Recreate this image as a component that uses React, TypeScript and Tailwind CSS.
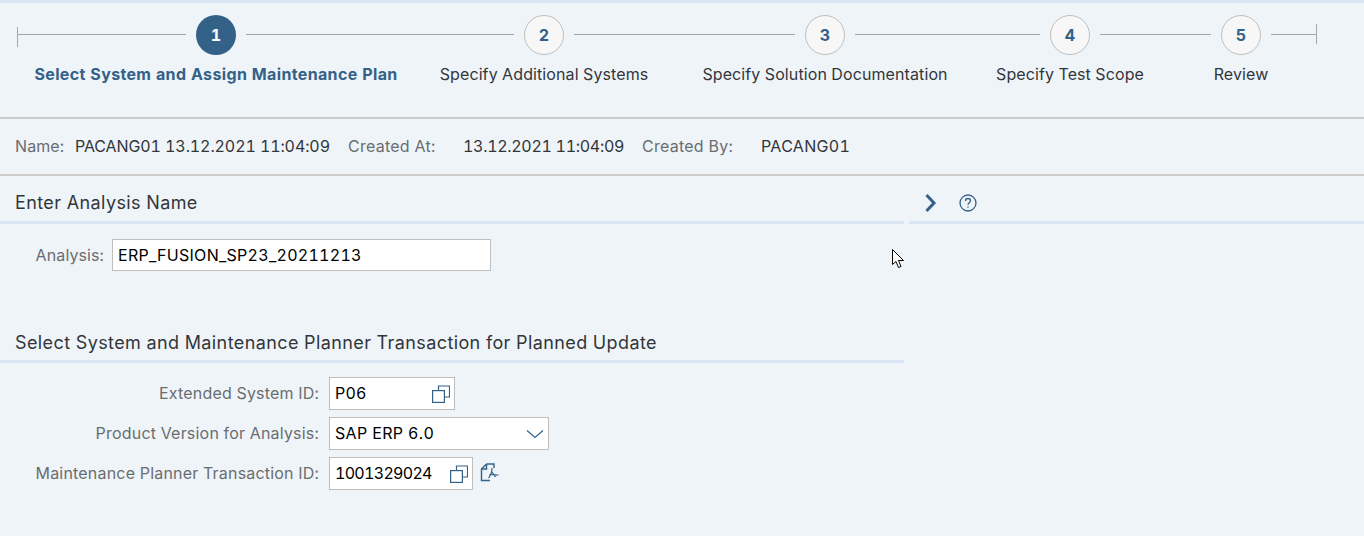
import { Fragment } from "react";

const STEPS = [
  { n: 1, label: "Select System and Assign Maintenance Plan", line: 168 },
  { n: 2, label: "Specify Additional Systems", line: 268 },
  { n: 3, label: "Specify Solution Documentation", line: 221 },
  { n: 4, label: "Specify Test Scope", line: 185 },
  { n: 5, label: "Review", line: 111 },
];

const CopyIcon = () => (
  <svg width="18" height="18" viewBox="0 0 18 18" fill="none" stroke="#346187" strokeWidth="1.2">
    <path d="M6.500 5V1h11v11h-5" />
    <rect x="0.600" y="5.600" width="11.800" height="11.800" />
  </svg>
);

const Field = ({ value, w, icon, valueClass }: { value: string; w: string; icon: React.ReactNode; valueClass?: string }) => (
  <div className={`${w} h-[33px] bg-white border border-[#bfbfbf] flex items-center justify-between pl-[5px] pr-[4px] text-[#000]`}>
    <span className={`-mt-[2px] ${valueClass ?? ""}`}>{value}</span>
    {icon}
  </div>
);

const App = () => {
  return (
    <div className="w-[1364px] h-[536px] overflow-hidden bg-[#eff4f9] text-[16px] text-[#32363a] tabular-nums tracking-[0.1px] font-['Inter','Liberation_Sans',sans-serif]">
      <div className="h-[3px] bg-[#d9e5f3]" />

      {/* wizard */}
      <div className="h-[116px] pt-[12px] pl-[17px] flex items-start border-b-2 border-[#cbcbcb]">
        <div className="w-px h-[20px] bg-[#a6a6a6] mt-[12px]" />
        {STEPS.map((s) => (
          <Fragment key={s.n}>
            <div className="h-px bg-[#a6a6a6] mt-[19px] mr-[10px]" style={{ width: s.line }} />
            <div className="w-10 flex flex-col items-center mr-[10px]">
              <div
                className={
                  s.n === 1
                    ? "w-10 h-10 rounded-full bg-[#346187] text-white font-bold flex items-center justify-center"
                    : "w-10 h-10 rounded-full bg-[#f7f7f7] border border-[#bfbfbf] text-[#346187] font-bold flex items-center justify-center"
                }
              >
                {s.n}
              </div>
              <div className={s.n === 1 ? "mt-[7px] whitespace-nowrap font-bold tracking-[0.35px] text-[#346187]" : "mt-[7px] whitespace-nowrap"}>
                {s.label}
              </div>
            </div>
          </Fragment>
        ))}
        <div className="w-[45px] h-px bg-[#a6a6a6] mt-[19px]" />
        <div className="w-px h-[20px] bg-[#a6a6a6] mt-[9px]" />
      </div>

      {/* header info */}
      <div className="h-[57px] pl-[15px] pb-[2px] flex items-center border-b-2 border-[#cbcbcb]">
        <span className="text-[#6a6d70] w-[60px]">Name:</span>
        <span className="w-[273px] tracking-[-0.1px]">PACANG01 13.12.2021 11:04:09</span>
        <span className="text-[#6a6d70] w-[115px] tracking-[0.25px]">Created At:</span>
        <span className="w-[179px] tracking-[-0.3px]">13.12.2021 11:04:09</span>
        <span className="text-[#6a6d70] w-[119px] tracking-[0.25px]">Created By:</span>
        <span className="tracking-[0.3px]">PACANG01</span>
      </div>

      <div className="flex">
        <div className="w-[904px] shrink-0">
          <div className="h-[48px] pl-[15px] pt-[7px] flex items-center text-[18px] tracking-[0.4px] border-b-[3px] border-[#d9e5f3]">
            Enter Analysis Name
          </div>
          <div className="mt-[15px] flex items-center h-[32px]">
            <span className="w-[104px] text-right text-[#6a6d70]">Analysis:</span>
            <div className="ml-[8px] w-[379px] h-[32px] bg-white border border-[#bfbfbf] flex items-center pl-[5px] text-black tracking-[0.28px]">
              ERP_FUSION_SP23_20211213
            </div>
          </div>

          <div className="mt-[48px] h-[44px] pl-[15px] pt-[6px] flex items-center text-[18px] tracking-[0.4px] border-b-[3px] border-[#d9e5f3]">
            Select System and Maintenance Planner Transaction for Planned Update
          </div>
          <div className="mt-[14px] flex flex-col gap-[7px] tracking-[0.2px]">
            <div className="flex items-center">
              <span className="w-[319px] text-right text-[#6a6d70] mr-[10px] -mt-[2px]">Extended System ID:</span>
              <Field value="P06" w="w-[126px]" icon={<CopyIcon />} />
            </div>
            <div className="flex items-center">
              <span className="w-[319px] text-right text-[#6a6d70] mr-[10px] -mt-[2px]">Product Version for Analysis:</span>
              <Field
                value="SAP ERP 6.0"
                w="w-[220px]"
                valueClass="tracking-[0.35px]"
                icon={
                  <svg width="18" height="10" viewBox="0 0 18 10" fill="none" stroke="#346187" strokeWidth="1.2">
                    <path d="M1 1.500l8 7 8-7" />
                  </svg>
                }
              />
            </div>
            <div className="flex items-center">
              <span className="w-[319px] text-right text-[#6a6d70] mr-[10px] -mt-[2px]">Maintenance Planner Transaction ID:</span>
              <Field value="1001329024" w="w-[144px]" valueClass="tracking-[-0.7px]" icon={<CopyIcon />} />
              <svg className="ml-[7px] -mt-[3px]" width="19" height="19" viewBox="0 0 19 19" fill="none" stroke="#346187" strokeWidth="1.400">
                <path d="M6.500 1H14v4M6.500 1L1.500 6v11.500H10" />
                <path d="M1.500 6h5V1" />
                <path d="M12 5c0 3-1 7-3.500 10" strokeWidth="1.200" />
                <path d="M9.500 11.500c3 0 6 0 9 .5M12 9l3.500 5" strokeWidth="1.200" />
              </svg>
            </div>
          </div>
        </div>

        <div className="ml-[5px] flex-1 h-[48px] pt-[9px] flex items-center border-b-[3px] border-[#d9e5f3]">
          <svg className="ml-[15px]" width="13" height="20" viewBox="0 0 13 20" fill="none" stroke="#346187" strokeWidth="3">
            <path d="M2.500 2L10 10l-7.500 8" />
          </svg>
          <svg className="ml-[22px]" width="18" height="18" viewBox="0 0 18 18" fill="none" stroke="#346187" strokeWidth="1.300">
            <circle cx="9" cy="9" r="8" />
            <path d="M6.500 7c0-1.500 1-2.500 2.500-2.500s2.500 1 2.500 2.300c0 2-2.500 2-2.500 4" />
            <path d="M9 12.500v1.200" />
          </svg>
        </div>
      </div>

      {/* mouse pointer from the capture */}
      <svg className="absolute left-[892px] top-[249px]" width="13" height="20" viewBox="0 0 13 20" fill="#fff" stroke="#000" strokeWidth="1">
        <path d="M0.500 0.500v15l3.500-3 2.500 6 2.500-1-2.500-6h5z" />
      </svg>
    </div>
  );
};

export default App;
